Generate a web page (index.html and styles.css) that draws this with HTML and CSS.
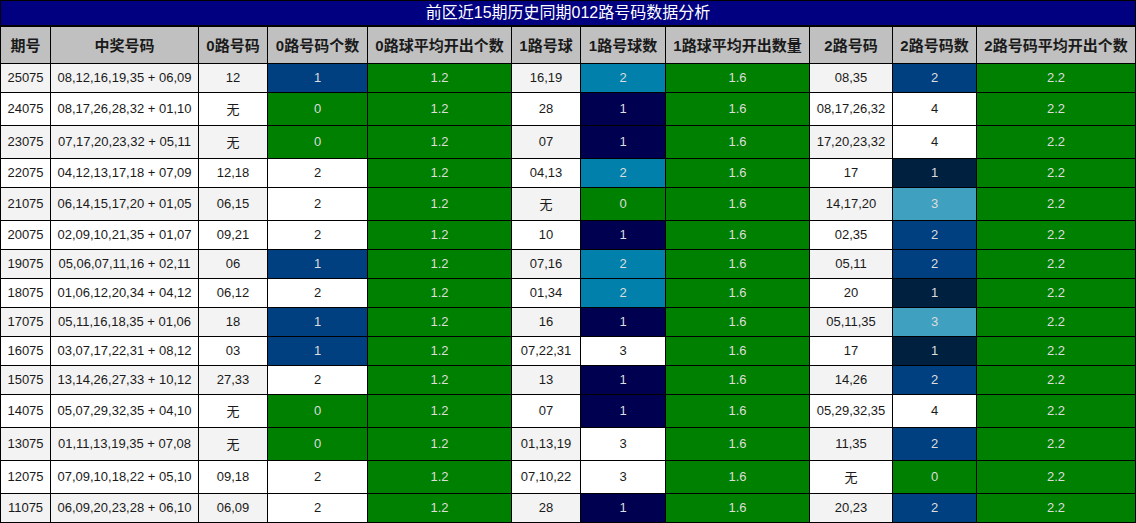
FILE: index.html
```html
<!DOCTYPE html>
<html lang="zh-CN">
<head>
<meta charset="utf-8">
<title>前区近15期历史同期012路号码数据分析</title>
<link rel="stylesheet" href="styles.css">
</head>
<body>
<div class="board">
  <div class="title">前区近15期历史同期012路号码数据分析</div>
  <div class="grid">
    <div class="h">期号</div><div class="h">中奖号码</div><div class="h">0路号码</div><div class="h">0路号码个数</div><div class="h">0路球平均开出个数</div><div class="h">1路号球</div><div class="h">1路号球数</div><div class="h">1路球平均开出数量</div><div class="h">2路号码</div><div class="h">2路号码数</div><div class="h">2路号码平均开出个数</div>

    <div class="c s">25075</div><div class="c s">08,12,16,19,35 + 06,09</div><div class="c s">12</div><div class="c blu">1</div><div class="c grn">1.2</div><div class="c s">16,19</div><div class="c teal">2</div><div class="c grn">1.6</div><div class="c s">08,35</div><div class="c blu">2</div><div class="c grn">2.2</div>

    <div class="c">24075</div><div class="c">08,17,26,28,32 + 01,10</div><div class="c">无</div><div class="c grn">0</div><div class="c grn">1.2</div><div class="c">28</div><div class="c navy">1</div><div class="c grn">1.6</div><div class="c">08,17,26,32</div><div class="c">4</div><div class="c grn">2.2</div>

    <div class="c s">23075</div><div class="c s">07,17,20,23,32 + 05,11</div><div class="c s">无</div><div class="c grn">0</div><div class="c grn">1.2</div><div class="c s">07</div><div class="c navy">1</div><div class="c grn">1.6</div><div class="c s">17,20,23,32</div><div class="c">4</div><div class="c grn">2.2</div>

    <div class="c">22075</div><div class="c">04,12,13,17,18 + 07,09</div><div class="c">12,18</div><div class="c">2</div><div class="c grn">1.2</div><div class="c">04,13</div><div class="c teal">2</div><div class="c grn">1.6</div><div class="c">17</div><div class="c dark">1</div><div class="c grn">2.2</div>

    <div class="c s">21075</div><div class="c s">06,14,15,17,20 + 01,05</div><div class="c s">06,15</div><div class="c">2</div><div class="c grn">1.2</div><div class="c s">无</div><div class="c grn">0</div><div class="c grn">1.6</div><div class="c s">14,17,20</div><div class="c light">3</div><div class="c grn">2.2</div>

    <div class="c">20075</div><div class="c">02,09,10,21,35 + 01,07</div><div class="c">09,21</div><div class="c">2</div><div class="c grn">1.2</div><div class="c">10</div><div class="c navy">1</div><div class="c grn">1.6</div><div class="c">02,35</div><div class="c blu">2</div><div class="c grn">2.2</div>

    <div class="c s">19075</div><div class="c s">05,06,07,11,16 + 02,11</div><div class="c s">06</div><div class="c blu">1</div><div class="c grn">1.2</div><div class="c s">07,16</div><div class="c teal">2</div><div class="c grn">1.6</div><div class="c s">05,11</div><div class="c blu">2</div><div class="c grn">2.2</div>

    <div class="c">18075</div><div class="c">01,06,12,20,34 + 04,12</div><div class="c">06,12</div><div class="c">2</div><div class="c grn">1.2</div><div class="c">01,34</div><div class="c teal">2</div><div class="c grn">1.6</div><div class="c">20</div><div class="c dark">1</div><div class="c grn">2.2</div>

    <div class="c s">17075</div><div class="c s">05,11,16,18,35 + 01,06</div><div class="c s">18</div><div class="c blu">1</div><div class="c grn">1.2</div><div class="c s">16</div><div class="c navy">1</div><div class="c grn">1.6</div><div class="c s">05,11,35</div><div class="c light">3</div><div class="c grn">2.2</div>

    <div class="c">16075</div><div class="c">03,07,17,22,31 + 08,12</div><div class="c">03</div><div class="c blu">1</div><div class="c grn">1.2</div><div class="c">07,22,31</div><div class="c">3</div><div class="c grn">1.6</div><div class="c">17</div><div class="c dark">1</div><div class="c grn">2.2</div>

    <div class="c s">15075</div><div class="c s">13,14,26,27,33 + 10,12</div><div class="c s">27,33</div><div class="c">2</div><div class="c grn">1.2</div><div class="c s">13</div><div class="c navy">1</div><div class="c grn">1.6</div><div class="c s">14,26</div><div class="c blu">2</div><div class="c grn">2.2</div>

    <div class="c">14075</div><div class="c">05,07,29,32,35 + 04,10</div><div class="c">无</div><div class="c grn">0</div><div class="c grn">1.2</div><div class="c">07</div><div class="c navy">1</div><div class="c grn">1.6</div><div class="c">05,29,32,35</div><div class="c">4</div><div class="c grn">2.2</div>

    <div class="c s">13075</div><div class="c s">01,11,13,19,35 + 07,08</div><div class="c s">无</div><div class="c grn">0</div><div class="c grn">1.2</div><div class="c s">01,13,19</div><div class="c">3</div><div class="c grn">1.6</div><div class="c s">11,35</div><div class="c blu">2</div><div class="c grn">2.2</div>

    <div class="c">12075</div><div class="c">07,09,10,18,22 + 05,10</div><div class="c">09,18</div><div class="c">2</div><div class="c grn">1.2</div><div class="c">07,10,22</div><div class="c">3</div><div class="c grn">1.6</div><div class="c">无</div><div class="c grn">0</div><div class="c grn">2.2</div>

    <div class="c s">11075</div><div class="c s">06,09,20,23,28 + 06,10</div><div class="c s">06,09</div><div class="c">2</div><div class="c grn">1.2</div><div class="c s">28</div><div class="c navy">1</div><div class="c grn">1.6</div><div class="c s">20,23</div><div class="c blu">2</div><div class="c grn">2.2</div>
  </div>
</div>
</body>
</html>
```

FILE: styles.css
```css
html, body {
  margin: 0;
  padding: 0;
  background: #ffffff;
}

.board {
  width: 1136px;
  box-sizing: border-box;
  background: #000000;
  padding: 1px;
  font-family: "Liberation Sans", "Noto Sans CJK SC", sans-serif;
}

.title {
  height: 24px;
  margin-bottom: 2px;
  background: #000080;
  color: #ffffff;
  font-size: 16px;
  line-height: 24px;
  text-align: center;
}

.grid {
  display: grid;
  grid-template-columns: 49px 147px 68px 99px 143px 68px 84px 143px 82px 83px 158px;
  gap: 1px;
}

.h {
  background: #c0c0c0;
  color: #1a1a1a;
  font-size: 15px;
  font-weight: bold;
  padding: 7px 0 8px;
  display: flex;
  align-items: center;
  justify-content: center;
  white-space: nowrap;
}

.c {
  background: #ffffff;
  color: #1a1a1a;
  font-size: 13px;
  padding: 6px 0 7px;
  display: flex;
  align-items: center;
  justify-content: center;
  white-space: nowrap;
}

.c.s { background: #f3f3f3; }

.c.grn   { background: #008000; color: #dddddd; }
.c.blu   { background: #004080; color: #dddddd; }
.c.teal  { background: #0080aa; color: #dddddd; }
.c.navy  { background: #000050; color: #dddddd; }
.c.dark  { background: #002040; color: #dddddd; }
.c.light { background: #40a0c0; color: #dddddd; }
```
